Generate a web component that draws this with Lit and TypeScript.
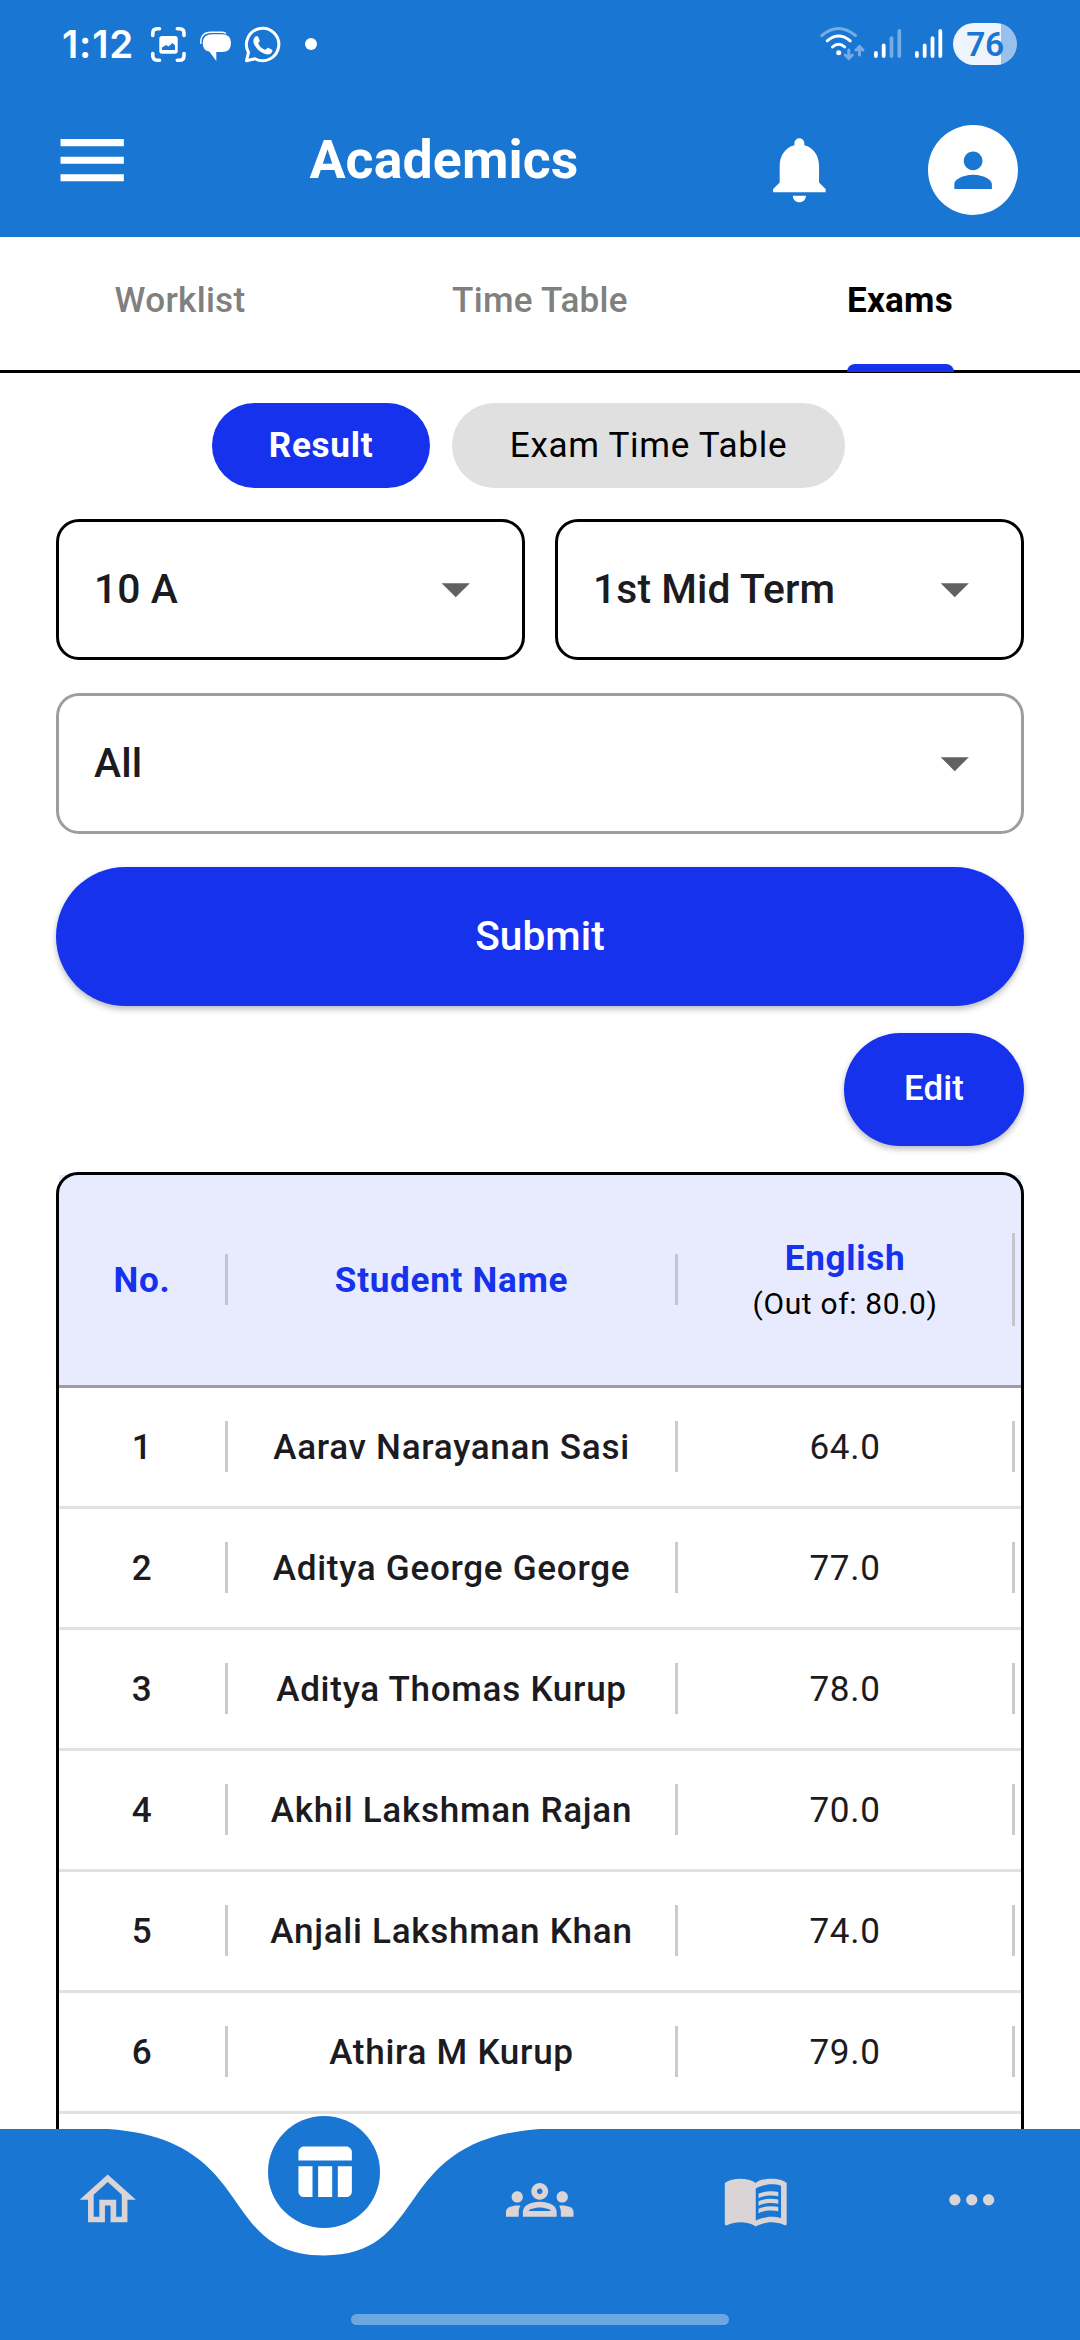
import { LitElement, html, css, svg } from "lit";
import { customElement } from "lit/decorators.js";

interface Student {
  no: number;
  name: string;
  english: string;
}

const STUDENTS: Student[] = [
  { no: 1, name: "Aarav Narayanan Sasi", english: "64.0" },
  { no: 2, name: "Aditya George George", english: "77.0" },
  { no: 3, name: "Aditya Thomas Kurup", english: "78.0" },
  { no: 4, name: "Akhil Lakshman Rajan", english: "70.0" },
  { no: 5, name: "Anjali Lakshman Khan", english: "74.0" },
  { no: 6, name: "Athira M Kurup", english: "79.0" },
];

const ICONS = {
  menu: "M3 18h18v-2H3v2zm0-5h18v-2H3v2zm0-7v2h18V6H3z",
  bell: "M12 22c1.1 0 2-.9 2-2h-4c0 1.1.89 2 2 2zm6-6v-5c0-3.07-1.64-5.64-4.5-6.32V4c0-.83-.67-1.5-1.5-1.5s-1.5.67-1.5 1.5v.68C7.63 5.36 6 7.92 6 11v5l-2 2v1h16v-1l-2-2z",
  person:
    "M12 12c2.21 0 4-1.79 4-4s-1.79-4-4-4-4 1.79-4 4 1.79 4 4 4zm0 2c-2.67 0-8 1.34-8 4v2h16v-2c0-2.66-5.33-4-8-4z",
  arrow: "M7 10l5 5 5-5z",
  home: "M12 5.69l5 4.5V18h-2v-6H9v6H7v-7.81l5-4.5M12 3L2 12h3v8h6v-6h2v6h6v-8h3L12 3z",
  table:
    "M10 10.02h5V21h-5V10.02zM17 21h3c1.1 0 2-.9 2-2v-9h-5v11zm3-18H5c-1.1 0-2 .9-2 2v3h19V5c0-1.1-.9-2-2-2zM3 19c0 1.1.9 2 2 2h3V10H3v9z",
  groups:
    "M4 13c1.1 0 2-.9 2-2s-.9-2-2-2-2 .9-2 2 .9 2 2 2zm1.13 1.1c-.37-.06-.74-.1-1.13-.1-.99 0-1.93.21-2.78.58C.48 14.9 0 15.62 0 16.43V18h4.5v-1.61c0-.83.23-1.61.63-2.29zM20 13c1.1 0 2-.9 2-2s-.9-2-2-2-2 .9-2 2 .9 2 2 2zm4 3.43c0-.81-.48-1.53-1.22-1.85-.85-.37-1.79-.58-2.78-.58-.39 0-.76.04-1.13.1.4.68.63 1.46.63 2.29V18H24v-1.57zm-7.76-2.78c-1.17-.52-2.61-.9-4.24-.9-1.63 0-3.07.39-4.24.9C6.68 14.13 6 15.21 6 16.39V18h12v-1.61c0-1.18-.68-2.26-1.76-2.74zM8.07 16c.09-.23.13-.39.91-.69.97-.38 1.99-.56 3.02-.56s2.05.18 3.02.56c.77.3.81.46.91.69H8.07zM12 8c.55 0 1 .45 1 1s-.45 1-1 1-1-.45-1-1 .45-1 1-1m0-2c-1.66 0-3 1.34-3 3s1.34 3 3 3 3-1.34 3-3-1.34-3-3-3z",
  book: "M21 5c-1.11-.35-2.33-.5-3.5-.5-1.95 0-4.05.4-5.5 1.5-1.45-1.1-3.55-1.5-5.5-1.5S2.45 4.9 1 6v14.65c0 .25.25.5.5.5.1 0 .15-.05.25-.05C3.1 20.45 5.05 20 6.5 20c1.95 0 4.05.4 5.5 1.5 1.35-.85 3.8-1.5 5.5-1.5 1.65 0 3.35.3 4.75 1.05.1.05.15.05.25.05.25 0 .5-.25.5-.5V6c-.6-.45-1.25-.75-2-1zm0 13.5c-1.1-.35-2.3-.5-3.5-.5-1.7 0-4.15.65-5.5 1.5V8c1.35-.85 3.8-1.5 5.5-1.5 1.2 0 2.4.15 3.5.5v11.5zM17.5 10.5c.88 0 1.73.09 2.5.26V9.24c-.79-.15-1.64-.24-2.5-.24-1.7 0-3.24.29-4.5.83v1.66c1.13-.64 2.7-.99 4.5-.99zM13 12.49v1.66c1.13-.64 2.7-.99 4.5-.99.88 0 1.73.09 2.5.26V11.9c-.79-.15-1.64-.24-2.5-.24-1.7 0-3.24.3-4.5.83zm4.5 1.84c-1.7 0-3.24.29-4.5.83v1.66c1.13-.64 2.7-.99 4.5-.99.88 0 1.73.09 2.5.26v-1.52c-.79-.16-1.64-.24-2.5-.24z",
  more: "M6 10c-1.1 0-2 .9-2 2s.9 2 2 2 2-.9 2-2-.9-2-2-2zm12 0c-1.1 0-2 .9-2 2s.9 2 2 2 2-.9 2-2-.9-2-2-2zm-6 0c-1.1 0-2 .9-2 2s.9 2 2 2 2-.9 2-2-.9-2-2-2z",
};

const icon = (d: string, cls: string) =>
  html`<svg class=${cls} viewBox="0 0 24 24" fill="currentColor"><path d=${d}></path></svg>`;

@customElement("status-bar")
export class StatusBar extends LitElement {
  static styles = css`
    :host {
      display: flex;
      height: 88px;
      align-items: center;
      color: #fff;
      padding: 0 63px 0 62px;
      box-sizing: border-box;
      font-family: Inter, Roboto, sans-serif;
    }
    .time {
      width: 88px;
      font-size: 38.5px;
      font-weight: 600;
      line-height: 40px;
      letter-spacing: 0.8px;
    }
    .left {
      width: 170px;
      height: 44px;
    }
    .spacer {
      flex: 1;
    }
    .right {
      width: 126px;
      height: 44px;
      margin-right: 9px;
    }
    .battery {
      display: flex;
      width: 64px;
      height: 42px;
      align-items: center;
      justify-content: center;
      border-radius: 21px;
      background: linear-gradient(90deg, #edf4fc 0 48px, #99c1eb 48px);
      color: #1976d2;
      font-family: Roboto, sans-serif;
      font-size: 33.5px;
      font-weight: 600;
      letter-spacing: -0.5px;
    }
  `;

  render() {
    const bars = (x: number, lit: number) =>
      [7, 14.5, 21.7, 29].map(
        (h, i) =>
          svg`<rect x=${x + i * 7.8} y=${36 - h} width="3.8" height=${h} rx="1.9" opacity=${i < lit ? 1 : 0.4}></rect>`,
      );
    return html`
      <span class="time">1:12</span>
      <svg class="left" viewBox="0 0 170 44" fill="none" stroke="#fff">
        <g stroke-width="3.6" stroke-linecap="round">
          <path d="M2.8 13.500V11.300q0-4.500 4.500-4.500h2.200M27.300 6.800h2.200q4.500 0 4.500 4.500v2.200M34 31.500v2.200q0 4.500-4.500 4.500h-2.200M9.500 38.200H7.300q-4.500 0-4.500-4.500v-2.200"></path>
        </g>
        <path
          fill="#fff"
          stroke="none"
          fill-rule="evenodd"
          d="M12 14h13q2.700 0 2.700 2.700v12.300q0 2.700-2.700 2.700H12q-2.700 0-2.700-2.700V16.700Q9.300 14 12 14zM12 28h13v-4.500l-2.500-2.500-4 3.500-2.500-1.500-4 2.500z"
        ></path>
        <path
          fill="#fff"
          stroke="none"
          d="M62.500 12.200h9.500q9 0 9 8.700 0 9.100-9 9.100h-5.700v9l-7-9.500q-6.600-1-6.600-8.600 0-8.700 9.800-8.700z"
        ></path>
        <path stroke-width="1.400" d="M50.800 22Q50 10.400 61 10.300h10.500q2.800 0 4.500 1.200"></path>
        <path
          stroke-width="3"
          stroke-linejoin="round"
          d="M96.500 38.700l2-8.300a16.200 16.200 0 1 1 6.400 6.300z"
        ></path>
        <path
          fill="#fff"
          stroke="none"
          d="M105.500 14.500c1-.9 2.200-.6 2.700.5l1.500 3.500c.3 1-1.800 2.200-1.300 3.300 1.300 2.800 3.600 4.900 6.600 6 1.100.3 2.300-2.500 3.300-2l3.600 1.900c.8.500.6 1.500 0 2.600-1.600 2.600-4.700 2.700-8 1.300-4.800-2-8.200-5.600-9.900-9.500-1.100-2.900-.7-5.900 1.500-7.600z"
        ></path>
        <circle cx="161" cy="22" r="6" fill="#fff" stroke="none"></circle>
      </svg>
      <span class="spacer"></span>
      <svg class="right" viewBox="0 0 126 44" fill="#fff">
        <g fill="none" stroke="#fff" stroke-linecap="round" stroke-width="3">
          <path opacity=".4" d="M3.800 13.500Q20.500-.5 37.400 13.500"></path>
          <path d="M9.200 18.800q11.300-9.500 23 0"></path>
          <path d="M14.500 25q6.200-5.600 12.200 0"></path>
          <g opacity=".4">
            <path d="M30.800 28v8.500M27.300 33l3.500 3.500 3.500-3.500M41.500 33V24.500M38 28l3.500-3.500L45 28"></path>
          </g>
        </g>
        <circle cx="20.700" cy="30.700" r="2.500"></circle>
        ${bars(56, 2)} ${bars(97, 4)}
      </svg>
      <span class="battery">76</span>
    `;
  }
}

@customElement("select-field")
export class SelectField extends LitElement {
  static properties = { value: { type: String }, muted: { type: Boolean, reflect: true } };
  declare value: string;
  declare muted: boolean;

  static styles = css`
    :host {
      display: flex;
      flex: 1;
      height: 141px;
      box-sizing: border-box;
      align-items: center;
      justify-content: space-between;
      padding: 0 33px 1px 35px;
      border: 3px solid #000;
      border-radius: 23px;
      color: #1c1b1f;
      font-size: 40.8px;
      font-weight: 500;
      letter-spacing: 0.1px;
    }
    :host([muted]) {
      border-color: #9e9e9e;
    }
    .arrow {
      width: 67.5px;
      height: 67.5px;
      color: #616161;
    }
  `;

  render() {
    return html`<span>${this.value}</span>${icon(ICONS.arrow, "arrow")}`;
  }
}

@customElement("marks-table")
export class MarksTable extends LitElement {
  static styles = css`
    :host {
      display: block;
      position: relative;
      height: 1100px;
      padding: 3px 3px 0;
      box-sizing: border-box;
      font-size: 35.1px;
      letter-spacing: 0.7px;
      color: #1c1b1f;
    }
    .frame {
      position: absolute;
      inset: 0;
      border: 3px solid #000;
      border-radius: 22px;
    }
    .row {
      display: flex;
      align-items: center;
      height: 120.94px;
      box-sizing: border-box;
      border-bottom: 3px solid #e1e1e1;
    }
    .head {
      height: 213.5px;
      background: #e8eafd;
      border-bottom-color: #9c9da4;
      color: #1732ec;
      font-weight: 700;
    }
    .cell {
      display: flex;
      flex-direction: column;
      align-items: center;
      justify-content: center;
      box-sizing: border-box;
      height: 51px;
      border-right: 3px solid #cbcbcd;
      font-weight: 500;
      white-space: nowrap;
    }
    .head .cell {
      font-weight: 700;
      border-right-color: #c4c5d2;
    }
    .no {
      width: 169px;
    }
    .name {
      width: 450px;
    }
    .mark {
      width: 337px;
    }
    .row .mark {
      font-weight: 400;
    }
    .head .mark {
      height: 93px;
      padding-top: 2px;
      line-height: 46px;
      font-weight: 700;
    }
    .head .sub {
      color: #000;
      font-size: 29.9px;
      font-weight: 400;
    }
  `;

  render() {
    return html`
      <div class="row head">
        <div class="cell no">No.</div>
        <div class="cell name">Student Name</div>
        <div class="cell mark"><span>English</span><span class="sub">(Out of: 80.0)</span></div>
      </div>
      ${STUDENTS.map(
        (s) => html`<div class="row">
          <div class="cell no">${s.no}</div>
          <div class="cell name">${s.name}</div>
          <div class="cell mark">${s.english}</div>
        </div>`,
      )}
      <div class="frame"></div>
    `;
  }
}

@customElement("bottom-nav")
export class BottomNav extends LitElement {
  static styles = css`
    :host {
      display: block;
      position: relative;
      height: 211px;
      background: #fff;
    }
    .shape {
      position: absolute;
      inset: 0;
      width: 1080px;
      height: 211px;
      color: #1976d2;
    }
    .items {
      position: relative;
      display: grid;
      grid-template-columns: repeat(5, 216px);
      justify-items: center;
      align-items: center;
      height: 141px;
      color: #dad4d7;
    }
    .icon {
      width: 67.5px;
      height: 67.5px;
    }
    .active {
      display: flex;
      align-items: center;
      justify-content: center;
      width: 112px;
      height: 112px;
      margin-top: -56px;
      border-radius: 50%;
      background: #1976d2;
      color: #fff;
    }
    .handle {
      position: relative;
      width: 378px;
      height: 11px;
      margin: 44px auto 0;
      border-radius: 6px;
      background: #6ca7e2;
    }
  `;

  render() {
    return html`
      <svg class="shape" viewBox="0 0 1080 211" fill="currentColor">
        <path
          d="M0 0H108C259.200 10.500 216 126.500 324 126.500S388.800 10.500 540 0H1080V211H0z"
        ></path>
      </svg>
      <div class="items">
        ${icon(ICONS.home, "icon")}
        <span class="active">${icon(ICONS.table, "icon")}</span>
        ${icon(ICONS.groups, "icon")} ${icon(ICONS.book, "icon")} ${icon(ICONS.more, "icon")}
      </div>
      <div class="handle"></div>
    `;
  }
}

@customElement("app-root")
export class AppRoot extends LitElement {
  static styles = css`
    :host {
      display: flex;
      flex-direction: column;
      width: 1080px;
      height: 2340px;
      overflow: hidden;
      background: #fff;
      font-family: Roboto, sans-serif;
    }
    .header {
      height: 237px;
      background: #1976d2;
      color: #fff;
    }
    .bar {
      display: flex;
      align-items: center;
      height: 149px;
      padding: 0 62px 0 50px;
    }
    .menu {
      width: 84.4px;
      height: 84.4px;
      margin-top: -5px;
    }
    .title {
      flex: 1;
      padding-left: 175px;
      margin-top: -7px;
      font-size: 53.7px;
      font-weight: 700;
      letter-spacing: 0.1px;
    }
    .bell {
      width: 78.75px;
      height: 78.75px;
      margin: 13px 89px 0 0;
    }
    .avatar {
      display: flex;
      align-items: center;
      justify-content: center;
      width: 90px;
      height: 90px;
      margin-top: 15px;
      border-radius: 50%;
      background: #fff;
      color: #1976d2;
    }
    .person {
      width: 56.25px;
      height: 56.25px;
    }
    .tabs {
      display: grid;
      grid-template-columns: repeat(3, 1fr);
      height: 136px;
      box-sizing: border-box;
      border-bottom: 3px solid #000;
    }
    .tab {
      display: flex;
      justify-content: center;
      font-size: 35.1px;
      font-weight: 500;
      line-height: 127px;
      letter-spacing: 0.28px;
      color: #808080;
    }
    .tab.on {
      color: #000;
      font-weight: 700;
    }
    .mark {
      display: flex;
      flex-direction: column;
      align-items: center;
      height: 135px;
    }
    .mark::after {
      content: "";
      width: 107px;
      height: 8px;
      border-radius: 8px 8px 0 0;
      background: #1732ec;
    }
    .content {
      flex: 1;
      min-height: 0;
      overflow: hidden;
      padding: 30px 56px 0;
    }
    .pills {
      display: flex;
      gap: 22px;
      padding-left: 156px;
    }
    .pill {
      box-sizing: border-box;
      width: 393px;
      height: 85px;
      border-radius: 43px;
      text-align: center;
      line-height: 84px;
      font-size: 35.1px;
      letter-spacing: 0.7px;
      background: #e0e0e0;
      color: #000;
    }
    .pill.on {
      width: 218px;
      background: #1732ec;
      color: #fff;
      font-weight: 700;
    }
    .selects {
      display: flex;
      gap: 30px;
      margin-top: 31px;
    }
    .selects.second {
      margin-top: 33px;
    }
    .button {
      display: flex;
      align-items: center;
      justify-content: center;
      box-sizing: border-box;
      padding-bottom: 2px;
      border-radius: 70px;
      background: #1732ec;
      color: #fff;
      font-weight: 500;
      box-shadow: 0 3px 6px rgba(0, 0, 0, 0.28);
    }
    .submit {
      height: 139px;
      margin-top: 33px;
      font-size: 40.6px;
      letter-spacing: 0.1px;
    }
    .edit {
      width: 180px;
      height: 113px;
      margin: 27px 0 25.5px auto;
      font-size: 34.9px;
      letter-spacing: 0.1px;
    }
  `;

  render() {
    return html`
      <div class="header">
        <status-bar></status-bar>
        <div class="bar">
          ${icon(ICONS.menu, "menu")}
          <span class="title">Academics</span>
          ${icon(ICONS.bell, "bell")}
          <span class="avatar">${icon(ICONS.person, "person")}</span>
        </div>
      </div>
      <div class="tabs">
        <span class="tab">Worklist</span>
        <span class="tab">Time Table</span>
        <span class="tab on"><span class="mark">Exams</span></span>
      </div>
      <div class="content">
        <div class="pills">
          <div class="pill on">Result</div>
          <div class="pill">Exam Time Table</div>
        </div>
        <div class="selects">
          <select-field value="10 A"></select-field>
          <select-field value="1st Mid Term"></select-field>
        </div>
        <div class="selects second"><select-field muted value="All"></select-field></div>
        <div class="button submit">Submit</div>
        <div class="button edit">Edit</div>
        <marks-table></marks-table>
      </div>
      <bottom-nav></bottom-nav>
    `;
  }
}
